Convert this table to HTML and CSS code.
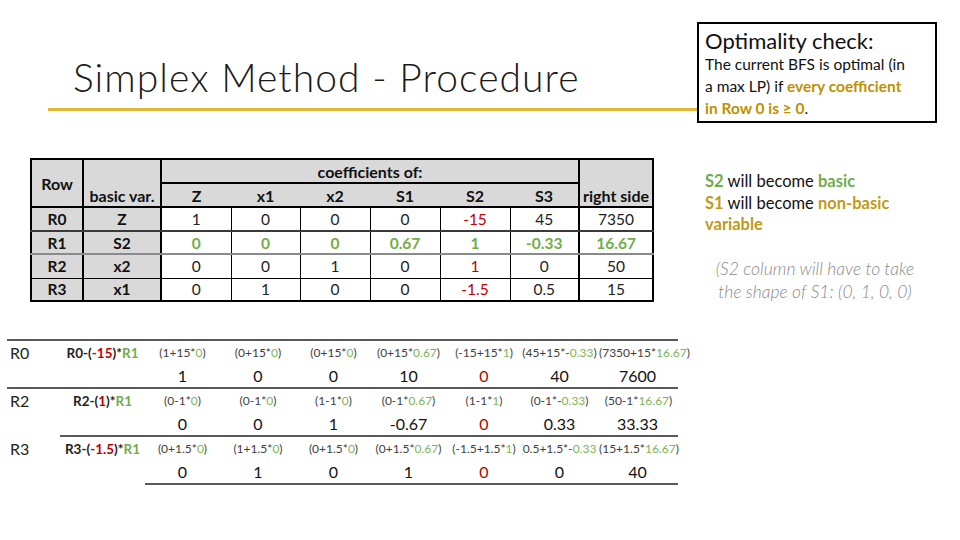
FILE: index.html
```html
<!DOCTYPE html>
<html lang="en">
<head>
<meta charset="utf-8">
<title>Simplex Method - Procedure</title>
<link rel="stylesheet" href="styles.css">
</head>
<body>
<div class="slide">
  <div class="left">
    <div class="title"><h1>Simplex Method - Procedure</h1></div>

    <table class="tab">
      <colgroup>
        <col class="w-row"><col class="w-bv"><col class="w-z"><col class="w-x1"><col class="w-x2"><col class="w-s1"><col class="w-s2"><col class="w-s3"><col class="w-rs">
      </colgroup>
      <tr class="h1">
        <th rowspan="2" class="rowh">Row</th>
        <th rowspan="2" class="bv">basic var.</th>
        <th colspan="6" class="coef">coefficients of:</th>
        <th rowspan="2" class="rs">right side</th>
      </tr>
      <tr class="h2">
        <th>Z</th><th>x1</th><th>x2</th><th>S1</th><th>S2</th><th>S3</th>
      </tr>
      <tr class="r0">
        <td class="gc c1">R0</td><td class="gc c2">Z</td>
        <td>1</td><td>0</td><td>0</td><td>0</td><td class="red">-15</td><td class="c8">45</td><td>7350</td>
      </tr>
      <tr class="r1 green">
        <td class="gc c1">R1</td><td class="gc c2">S2</td>
        <td>0</td><td>0</td><td>0</td><td>0.67</td><td>1</td><td class="c8">-0.33</td><td>16.67</td>
      </tr>
      <tr class="r2">
        <td class="gc c1">R2</td><td class="gc c2">x2</td>
        <td>0</td><td>0</td><td>1</td><td>0</td><td class="red">1</td><td class="c8">0</td><td>50</td>
      </tr>
      <tr class="r3">
        <td class="gc c1">R3</td><td class="gc c2">x1</td>
        <td>0</td><td>1</td><td>0</td><td>0</td><td class="red">-1.5</td><td class="c8">0.5</td><td>15</td>
      </tr>
    </table>

    <table class="ops">
      <colgroup>
        <col class="o-lbl"><col class="o-op"><col class="o-n"><col class="o-n2"><col class="o-n"><col class="o-n"><col class="o-n2"><col class="o-n"><col class="o-last">
      </colgroup>
      <tr class="f">
        <td class="lbl">R0</td>
        <td class="op">R0-(<span class="r">-15</span>)*<span class="g">R1</span></td>
        <td><div class="fx"><span>(1+15*<span class="lg">0</span>)</span></div></td>
        <td><div class="fx"><span>(0+15*<span class="lg">0</span>)</span></div></td>
        <td><div class="fx"><span>(0+15*<span class="lg">0</span>)</span></div></td>
        <td><div class="fx"><span>(0+15*<span class="lg">0.67</span>)</span></div></td>
        <td><div class="fx"><span>(-15+15*<span class="lg">1</span>)</span></div></td>
        <td><div class="fx"><span>(45+15*-<span class="lg">0.33</span>)</span></div></td>
        <td class="last"><div class="lx">(7350+15*<span class="lg">16.67</span>)</div></td>
      </tr>
      <tr class="v full">
        <td></td><td></td>
        <td>1</td><td>0</td><td>0</td><td>10</td><td class="red">0</td><td>40</td><td>7600</td>
      </tr>
      <tr class="f">
        <td class="lbl">R2</td>
        <td class="op">R2-(<span class="r">1</span>)*<span class="g">R1</span></td>
        <td><div class="fx"><span>(0-1*<span class="lg">0</span>)</span></div></td>
        <td><div class="fx"><span>(0-1*<span class="lg">0</span>)</span></div></td>
        <td><div class="fx"><span>(1-1*<span class="lg">0</span>)</span></div></td>
        <td><div class="fx"><span>(0-1*<span class="lg">0.67</span>)</span></div></td>
        <td><div class="fx"><span>(1-1*<span class="lg">1</span>)</span></div></td>
        <td><div class="fx"><span>(0-1*-<span class="lg">0.33</span>)</span></div></td>
        <td class="last"><div class="lx">(50-1*<span class="lg">16.67</span>)</div></td>
      </tr>
      <tr class="v from2">
        <td></td><td></td>
        <td>0</td><td>0</td><td>1</td><td>-0.67</td><td class="red">0</td><td>0.33</td><td>33.33</td>
      </tr>
      <tr class="f">
        <td class="lbl">R3</td>
        <td class="op">R3-(<span class="r">-1.5</span>)*<span class="g">R1</span></td>
        <td><div class="fx"><span>(0+1.5*<span class="lg">0</span>)</span></div></td>
        <td><div class="fx"><span>(1+1.5*<span class="lg">0</span>)</span></div></td>
        <td><div class="fx"><span>(0+1.5*<span class="lg">0</span>)</span></div></td>
        <td><div class="fx"><span>(0+1.5*<span class="lg">0.67</span>)</span></div></td>
        <td><div class="fx"><span>(-1.5+1.5*<span class="lg">1</span>)</span></div></td>
        <td><div class="fx"><span>(0.5+1.5*-<span class="lg">0.33</span>)</span></div></td>
        <td class="last"><div class="lx">(15+1.5*<span class="lg">16.67</span>)</div></td>
      </tr>
      <tr class="v from3">
        <td></td><td></td>
        <td>0</td><td>1</td><td>0</td><td>1</td><td class="red">0</td><td>0</td><td>40</td>
      </tr>
    </table>
  </div>

  <div class="right">
    <div class="box">
      <div class="box-title">Optimality check:</div>
      <p class="box-text">The current BFS is optimal (in<br>a max LP) if <b class="gold">every coefficient<br>in Row 0 is ≥ 0</b>.</p>
    </div>
    <p class="note"><b class="grn">S2</b> will become <b class="grn">basic</b><br><b class="gold">S1</b> will become <b class="gold">non-basic<br>variable</b></p>
    <p class="ital">(S2 column will have to take<br>the shape of S1: (0, 1, 0, 0)</p>
  </div>
</div>
</body>
</html>
```

FILE: styles.css
```css
* { box-sizing: border-box; }
html, body { margin: 0; padding: 0; background: #fff; }
body { font-family: Lato, "Open Sans", sans-serif; color: #000; }

.slide {
  width: 960px;
  height: 540px;
  display: grid;
  grid-template-columns: 697px 240px;
  align-items: start;
  overflow: hidden;
}

/* title */
.title {
  margin-left: 48px;
  height: 111px;
  padding: 0 0 11px 25px;
  border-bottom: 3px solid #e3b637;
  display: flex;
  align-items: flex-end;
}
.title h1 {
  margin: 0;
  font-weight: 300;
  font-size: 39px;
  line-height: 40px;
  letter-spacing: 1.05px;
  color: #1a1a1a;
  white-space: nowrap;
}

/* coefficient table */
.tab {
  margin: 47px 0 0 30px;
  border-collapse: collapse;
  table-layout: fixed;
  width: 622px;
  border: 2px solid #000;
  font-size: 15.5px;
  text-align: center;
}
.w-row { width: 52px; }
.w-bv { width: 78px; }
.w-z { width: 70px; }
.w-x1 { width: 69px; }
.w-x2 { width: 70px; }
.w-s1 { width: 70px; }
.w-s2 { width: 70px; }
.w-s3 { width: 69px; }
.w-rs { width: 74px; }

.tab th {
  background: #d9d9d9;
  font-size: 16px;
  font-weight: 700;
  border: 0;
  padding: 0;
  color: #111;
  white-space: nowrap;
}
.tab .h1 { height: 24px; }
.tab .h2 { height: 24px; }
.tab .h2 th { border-bottom: 2px solid #000; }
.tab th.coef { border-bottom: 2px solid #000; vertical-align: middle; }
.tab th.rowh { border-right: 2px solid #000; border-bottom: 2px solid #000; vertical-align: middle; }
.tab th.bv { border-right: 2px solid #000; border-bottom: 2px solid #000; vertical-align: bottom; padding-bottom: 1px; }
.tab th.rs { border-left: 2px solid #000; border-bottom: 2px solid #000; vertical-align: bottom; padding-bottom: 1px; }

.tab td {
  border: 1px solid #000;
  padding: 0;
  color: #222;
}
.tab td.gc { background: #d9d9d9; font-weight: 700; color: #111; }
.tab td.c1, .tab td.c2 { border-right: 2px solid #000; }
.tab td.c8 { border-right: 2px solid #000; }
.tab .r0 { height: 24px; }
.tab .r0 td { border-bottom: 2px solid #3a3a3a; }
.tab .r1 { height: 23px; }
.tab .r1 td { border-bottom: 2px solid #8a8a8a; }
.tab .r2 { height: 24px; }
.tab .r3 { height: 23px; }
.tab .green td:not(.gc) { color: #70ad47; font-weight: 700; }
.tab td.red { color: #c00000; }

/* row operations table */
.ops {
  margin: 37px 0 0 7px;
  border-collapse: collapse;
  table-layout: fixed;
  width: 671px;
  border-top: 2px solid #595959;
  text-align: center;
}
.o-lbl { width: 53px; }
.o-op { width: 85px; }
.o-n { width: 75px; }
.o-n2 { width: 76px; }
.o-last { width: 81px; }
.ops td { padding: 0; }
.ops tr { height: 24px; }
.ops .f td { font-size: 12px; color: #404040; overflow: hidden; }
.ops .f td.last { overflow: visible; }
.ops .fx {
  display: flex;
  justify-content: center;
  white-space: nowrap;
}
.ops .lx {
  white-space: nowrap;
  text-align: center;
  padding-left: 2px;
}
.ops td.lbl { font-size: 16px; text-align: left; padding-left: 3px; color: #222; }
.ops td.op { font-size: 13.5px; font-weight: 700; color: #222; white-space: nowrap; }
.ops .r { color: #c00000; }
.ops .g { color: #70ad47; }
.ops .lg { color: #7cb45a; }
.ops .v td { font-size: 16px; color: #111; }
.ops .v td.red { color: #c00000; }
.ops .v.full td { border-bottom: 2px solid #595959; }
.ops .v.from2 td:nth-child(n+2) { border-bottom: 2px solid #595959; }
.ops .v.from3 td:nth-child(n+3) { border-bottom: 2px solid #595959; }

/* right column */
.right { padding-top: 22px; }
.box {
  width: 240px;
  height: 101px;
  border: 2px solid #000;
  padding: 5px 6px 0 6px;
}
.box-title {
  font-size: 22px;
  line-height: 24px;
  color: #111;
}
.box-text {
  margin: 0;
  font-size: 15.5px;
  line-height: 22px;
  color: #111;
  white-space: nowrap;
}
.gold { color: #bf9000; font-weight: 700; }
.grn { color: #70ad47; font-weight: 700; }
.note {
  margin: 48px 0 0 8px;
  font-size: 16.5px;
  line-height: 21.5px;
  color: #111;
  white-space: nowrap;
}
.note .gold { color: #bf9a16; }
.ital {
  margin: 21px 4px 0 0;
  text-align: center;
  font-size: 17.5px;
  font-style: italic;
  font-weight: 300;
  line-height: 23px;
  color: #8a8a8a;
  white-space: nowrap;
}
```
